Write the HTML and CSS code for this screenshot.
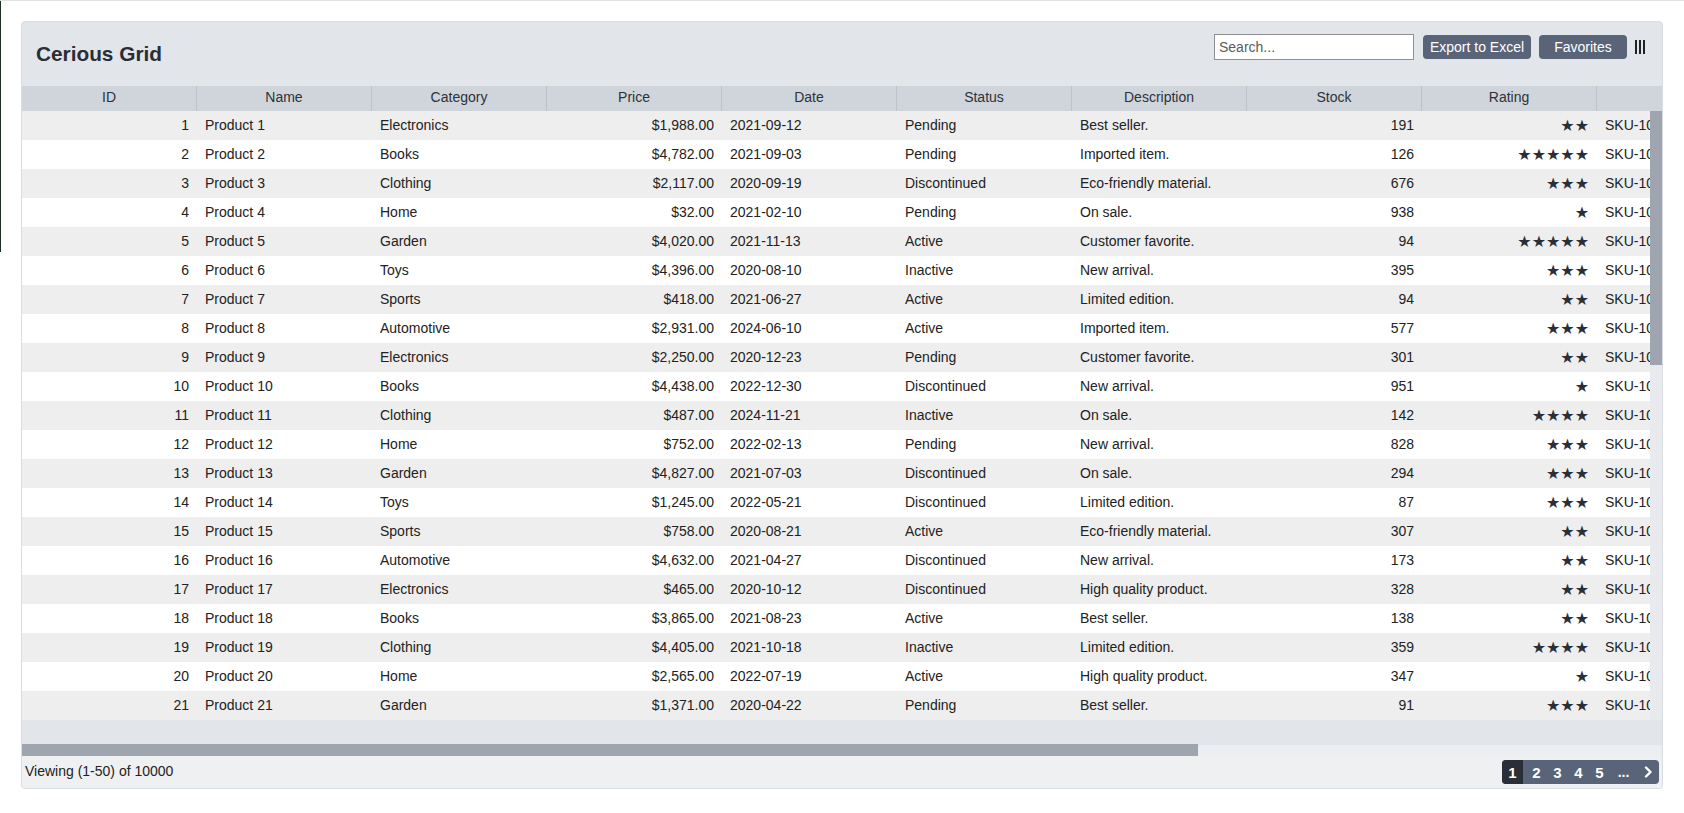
FILE: index.html
```html
<!DOCTYPE html>
<html lang="en">
<head>
<meta charset="utf-8">
<title>Cerious Grid</title>
<link rel="stylesheet" href="styles.css">
</head>
<body>
<div class="grid-card">
  <div class="grid-toolbar">
    <h2 class="grid-title">Cerious Grid</h2>
    <div class="grid-controls">
      <input class="search" type="text" placeholder="Search...">
      <button class="btn btn-export">Export to Excel</button>
      <button class="btn btn-fav">Favorites</button>
      <svg class="col-icon" width="11" height="14" viewBox="0 0 11 14"><rect x="0" y="0" width="2" height="14"/><rect x="4" y="0" width="2" height="14"/><rect x="8" y="0" width="2" height="14"/></svg>
    </div>
  </div>

  <div class="col-header">
    <div class="h">ID</div><div class="h">Name</div><div class="h">Category</div><div class="h">Price</div><div class="h">Date</div><div class="h">Status</div><div class="h">Description</div><div class="h">Stock</div><div class="h">Rating</div><div class="h">SKU</div>
  </div>

  <div class="grid-middle">
    <div class="viewport">
      <div class="row odd"><div class="c r">1</div><div class="c">Product 1</div><div class="c">Electronics</div><div class="c r">$1,988.00</div><div class="c">2021-09-12</div><div class="c">Pending</div><div class="c">Best seller.</div><div class="c r">191</div><div class="c r stars">★★</div><div class="c">SKU-10001</div></div>
      <div class="row"><div class="c r">2</div><div class="c">Product 2</div><div class="c">Books</div><div class="c r">$4,782.00</div><div class="c">2021-09-03</div><div class="c">Pending</div><div class="c">Imported item.</div><div class="c r">126</div><div class="c r stars">★★★★★</div><div class="c">SKU-10002</div></div>
      <div class="row odd"><div class="c r">3</div><div class="c">Product 3</div><div class="c">Clothing</div><div class="c r">$2,117.00</div><div class="c">2020-09-19</div><div class="c">Discontinued</div><div class="c">Eco-friendly material.</div><div class="c r">676</div><div class="c r stars">★★★</div><div class="c">SKU-10003</div></div>
      <div class="row"><div class="c r">4</div><div class="c">Product 4</div><div class="c">Home</div><div class="c r">$32.00</div><div class="c">2021-02-10</div><div class="c">Pending</div><div class="c">On sale.</div><div class="c r">938</div><div class="c r stars">★</div><div class="c">SKU-10004</div></div>
      <div class="row odd"><div class="c r">5</div><div class="c">Product 5</div><div class="c">Garden</div><div class="c r">$4,020.00</div><div class="c">2021-11-13</div><div class="c">Active</div><div class="c">Customer favorite.</div><div class="c r">94</div><div class="c r stars">★★★★★</div><div class="c">SKU-10005</div></div>
      <div class="row"><div class="c r">6</div><div class="c">Product 6</div><div class="c">Toys</div><div class="c r">$4,396.00</div><div class="c">2020-08-10</div><div class="c">Inactive</div><div class="c">New arrival.</div><div class="c r">395</div><div class="c r stars">★★★</div><div class="c">SKU-10006</div></div>
      <div class="row odd"><div class="c r">7</div><div class="c">Product 7</div><div class="c">Sports</div><div class="c r">$418.00</div><div class="c">2021-06-27</div><div class="c">Active</div><div class="c">Limited edition.</div><div class="c r">94</div><div class="c r stars">★★</div><div class="c">SKU-10007</div></div>
      <div class="row"><div class="c r">8</div><div class="c">Product 8</div><div class="c">Automotive</div><div class="c r">$2,931.00</div><div class="c">2024-06-10</div><div class="c">Active</div><div class="c">Imported item.</div><div class="c r">577</div><div class="c r stars">★★★</div><div class="c">SKU-10008</div></div>
      <div class="row odd"><div class="c r">9</div><div class="c">Product 9</div><div class="c">Electronics</div><div class="c r">$2,250.00</div><div class="c">2020-12-23</div><div class="c">Pending</div><div class="c">Customer favorite.</div><div class="c r">301</div><div class="c r stars">★★</div><div class="c">SKU-10009</div></div>
      <div class="row"><div class="c r">10</div><div class="c">Product 10</div><div class="c">Books</div><div class="c r">$4,438.00</div><div class="c">2022-12-30</div><div class="c">Discontinued</div><div class="c">New arrival.</div><div class="c r">951</div><div class="c r stars">★</div><div class="c">SKU-10010</div></div>
      <div class="row odd"><div class="c r">11</div><div class="c">Product 11</div><div class="c">Clothing</div><div class="c r">$487.00</div><div class="c">2024-11-21</div><div class="c">Inactive</div><div class="c">On sale.</div><div class="c r">142</div><div class="c r stars">★★★★</div><div class="c">SKU-10011</div></div>
      <div class="row"><div class="c r">12</div><div class="c">Product 12</div><div class="c">Home</div><div class="c r">$752.00</div><div class="c">2022-02-13</div><div class="c">Pending</div><div class="c">New arrival.</div><div class="c r">828</div><div class="c r stars">★★★</div><div class="c">SKU-10012</div></div>
      <div class="row odd"><div class="c r">13</div><div class="c">Product 13</div><div class="c">Garden</div><div class="c r">$4,827.00</div><div class="c">2021-07-03</div><div class="c">Discontinued</div><div class="c">On sale.</div><div class="c r">294</div><div class="c r stars">★★★</div><div class="c">SKU-10013</div></div>
      <div class="row"><div class="c r">14</div><div class="c">Product 14</div><div class="c">Toys</div><div class="c r">$1,245.00</div><div class="c">2022-05-21</div><div class="c">Discontinued</div><div class="c">Limited edition.</div><div class="c r">87</div><div class="c r stars">★★★</div><div class="c">SKU-10014</div></div>
      <div class="row odd"><div class="c r">15</div><div class="c">Product 15</div><div class="c">Sports</div><div class="c r">$758.00</div><div class="c">2020-08-21</div><div class="c">Active</div><div class="c">Eco-friendly material.</div><div class="c r">307</div><div class="c r stars">★★</div><div class="c">SKU-10015</div></div>
      <div class="row"><div class="c r">16</div><div class="c">Product 16</div><div class="c">Automotive</div><div class="c r">$4,632.00</div><div class="c">2021-04-27</div><div class="c">Discontinued</div><div class="c">New arrival.</div><div class="c r">173</div><div class="c r stars">★★</div><div class="c">SKU-10016</div></div>
      <div class="row odd"><div class="c r">17</div><div class="c">Product 17</div><div class="c">Electronics</div><div class="c r">$465.00</div><div class="c">2020-10-12</div><div class="c">Discontinued</div><div class="c">High quality product.</div><div class="c r">328</div><div class="c r stars">★★</div><div class="c">SKU-10017</div></div>
      <div class="row"><div class="c r">18</div><div class="c">Product 18</div><div class="c">Books</div><div class="c r">$3,865.00</div><div class="c">2021-08-23</div><div class="c">Active</div><div class="c">Best seller.</div><div class="c r">138</div><div class="c r stars">★★</div><div class="c">SKU-10018</div></div>
      <div class="row odd"><div class="c r">19</div><div class="c">Product 19</div><div class="c">Clothing</div><div class="c r">$4,405.00</div><div class="c">2021-10-18</div><div class="c">Inactive</div><div class="c">Limited edition.</div><div class="c r">359</div><div class="c r stars">★★★★</div><div class="c">SKU-10019</div></div>
      <div class="row"><div class="c r">20</div><div class="c">Product 20</div><div class="c">Home</div><div class="c r">$2,565.00</div><div class="c">2022-07-19</div><div class="c">Active</div><div class="c">High quality product.</div><div class="c r">347</div><div class="c r stars">★</div><div class="c">SKU-10020</div></div>
      <div class="row odd"><div class="c r">21</div><div class="c">Product 21</div><div class="c">Garden</div><div class="c r">$1,371.00</div><div class="c">2020-04-22</div><div class="c">Pending</div><div class="c">Best seller.</div><div class="c r">91</div><div class="c r stars">★★★</div><div class="c">SKU-10021</div></div>
    </div>
    <div class="vscroll"><div class="vthumb"></div></div>
  </div>

  <div class="band"></div>
  <div class="hscroll"><div class="hthumb"></div></div>

  <div class="grid-footer">
    <span class="viewing">Viewing (1-50) of 10000</span>
    <div class="pager">
      <span class="pg active">1</span><span class="pg first">2</span><span class="pg">3</span><span class="pg">4</span><span class="pg">5</span><span class="pg dots">...</span><span class="pg next"><svg width="9" height="12" viewBox="0 0 9 12"><path d="M2 1.5 L6.5 6 L2 10.5" fill="none" stroke="#fff" stroke-width="2.4" stroke-linecap="round" stroke-linejoin="round"/></svg></span>
    </div>
  </div>
</div>
</body>
</html>
```

FILE: styles.css
```css
html {
  background: #fff linear-gradient(to bottom, #1f2e20 0, #1f2e20 252px, transparent 252px) 0 0 / 1px 100% no-repeat;
}
body {
  margin: 0;
  border-top: 1px solid #e2e2e2;
  font-family: "Liberation Sans", Arial, Helvetica, sans-serif;
  font-size: 14px;
  color: #222;
}
.grid-card {
  margin: 20px 0 0 21px;
  width: 1640px;
  border: 1px solid #d9dce1;
  border-radius: 4px;
  overflow: hidden;
  background: #e2e5ea;
}
.grid-toolbar {
  height: 64px;
  display: flex;
  justify-content: space-between;
  align-items: flex-start;
  padding: 0 16px 0 14px;
}
.grid-title {
  margin: 19.5px 0 0 0;
  font-size: 20.8px;
  line-height: 24px;
  font-weight: bold;
  color: #2a2d35;
}
.grid-controls {
  margin-top: 12px;
  display: flex;
  align-items: center;
  gap: 8px;
}
.search {
  box-sizing: border-box;
  width: 200px;
  height: 26px;
  border: 1px solid #8f8f8f;
  padding: 0 4px;
  margin: 0 1px 0 0;
  font-family: "Liberation Sans", Arial, sans-serif;
  font-size: 14px;
  background: #fff;
  outline: none;
}
.search::placeholder { color: #5c5c5c; }
.btn {
  height: 24px;
  border: none;
  border-radius: 4px;
  background: #5a6478;
  color: #fff;
  font-family: "Liberation Sans", Arial, sans-serif;
  font-size: 14px;
  line-height: 24px;
  cursor: pointer;
}
.btn-export { width: 108px; padding: 0; }
.btn-fav { width: 88px; padding: 0; }
.col-icon { fill: #222; }

.col-header {
  height: 25px;
  display: grid;
  grid-template-columns: repeat(10, 175px);
  background: #d0d5dc;
  overflow: hidden;
}
.h {
  box-sizing: border-box;
  border-right: 1px solid #bcc3cc;
  text-align: center;
  line-height: 23px;
  color: #2e3139;
  white-space: nowrap;
}

.grid-middle {
  display: flex;
  height: 609px;
}
.viewport {
  flex: 1;
  overflow: hidden;
}
.row {
  display: grid;
  grid-template-columns: repeat(10, 175px);
  height: 29px;
  background: #fff;
}
.row.odd { background: #eeeeee; }
.c {
  padding: 0 8px;
  line-height: 29px;
  white-space: nowrap;
  overflow: hidden;
}
.c.r { text-align: right; }
.stars {
  font-family: "DejaVu Sans", sans-serif;
  font-size: 16px;
  letter-spacing: 0;
  padding-right: 8px;
  color: #2a2e38;
}
.vscroll {
  width: 12px;
  background: #e8eaed;
  border-bottom-left-radius: 3px;
  border-bottom-right-radius: 3px;
}
.vthumb {
  height: 254px;
  background: #9ea5ae;
}
.band {
  height: 24px;
  background: #e2e5ea;
}
.hscroll {
  height: 12px;
  background: #eceef1;
  box-shadow: inset 0 1px 1px rgba(0,0,0,0.04);
}
.hthumb {
  width: 1176px;
  height: 12px;
  background: #9ea5ae;
}
.grid-footer {
  height: 32px;
  background: #eff0f2;
  display: flex;
  justify-content: space-between;
  align-items: center;
  padding: 0 3px;
}
.viewing { color: #222; margin-bottom: 3px; }
.pager {
  display: flex;
  height: 24px;
  background: #5a6478;
  border-radius: 4px;
  overflow: hidden;
}
.pg {
  width: 21px;
  height: 24px;
  display: flex;
  align-items: center;
  justify-content: center;
  color: #fff;
  font-weight: bold;
  font-size: 15px;
}
.pg.active { background: #2a2e36; }
.pg.first { margin-left: 3px; }
.pg.dots { width: 27px; font-size: 14px; }
.pg.next { width: 22px; }
```
